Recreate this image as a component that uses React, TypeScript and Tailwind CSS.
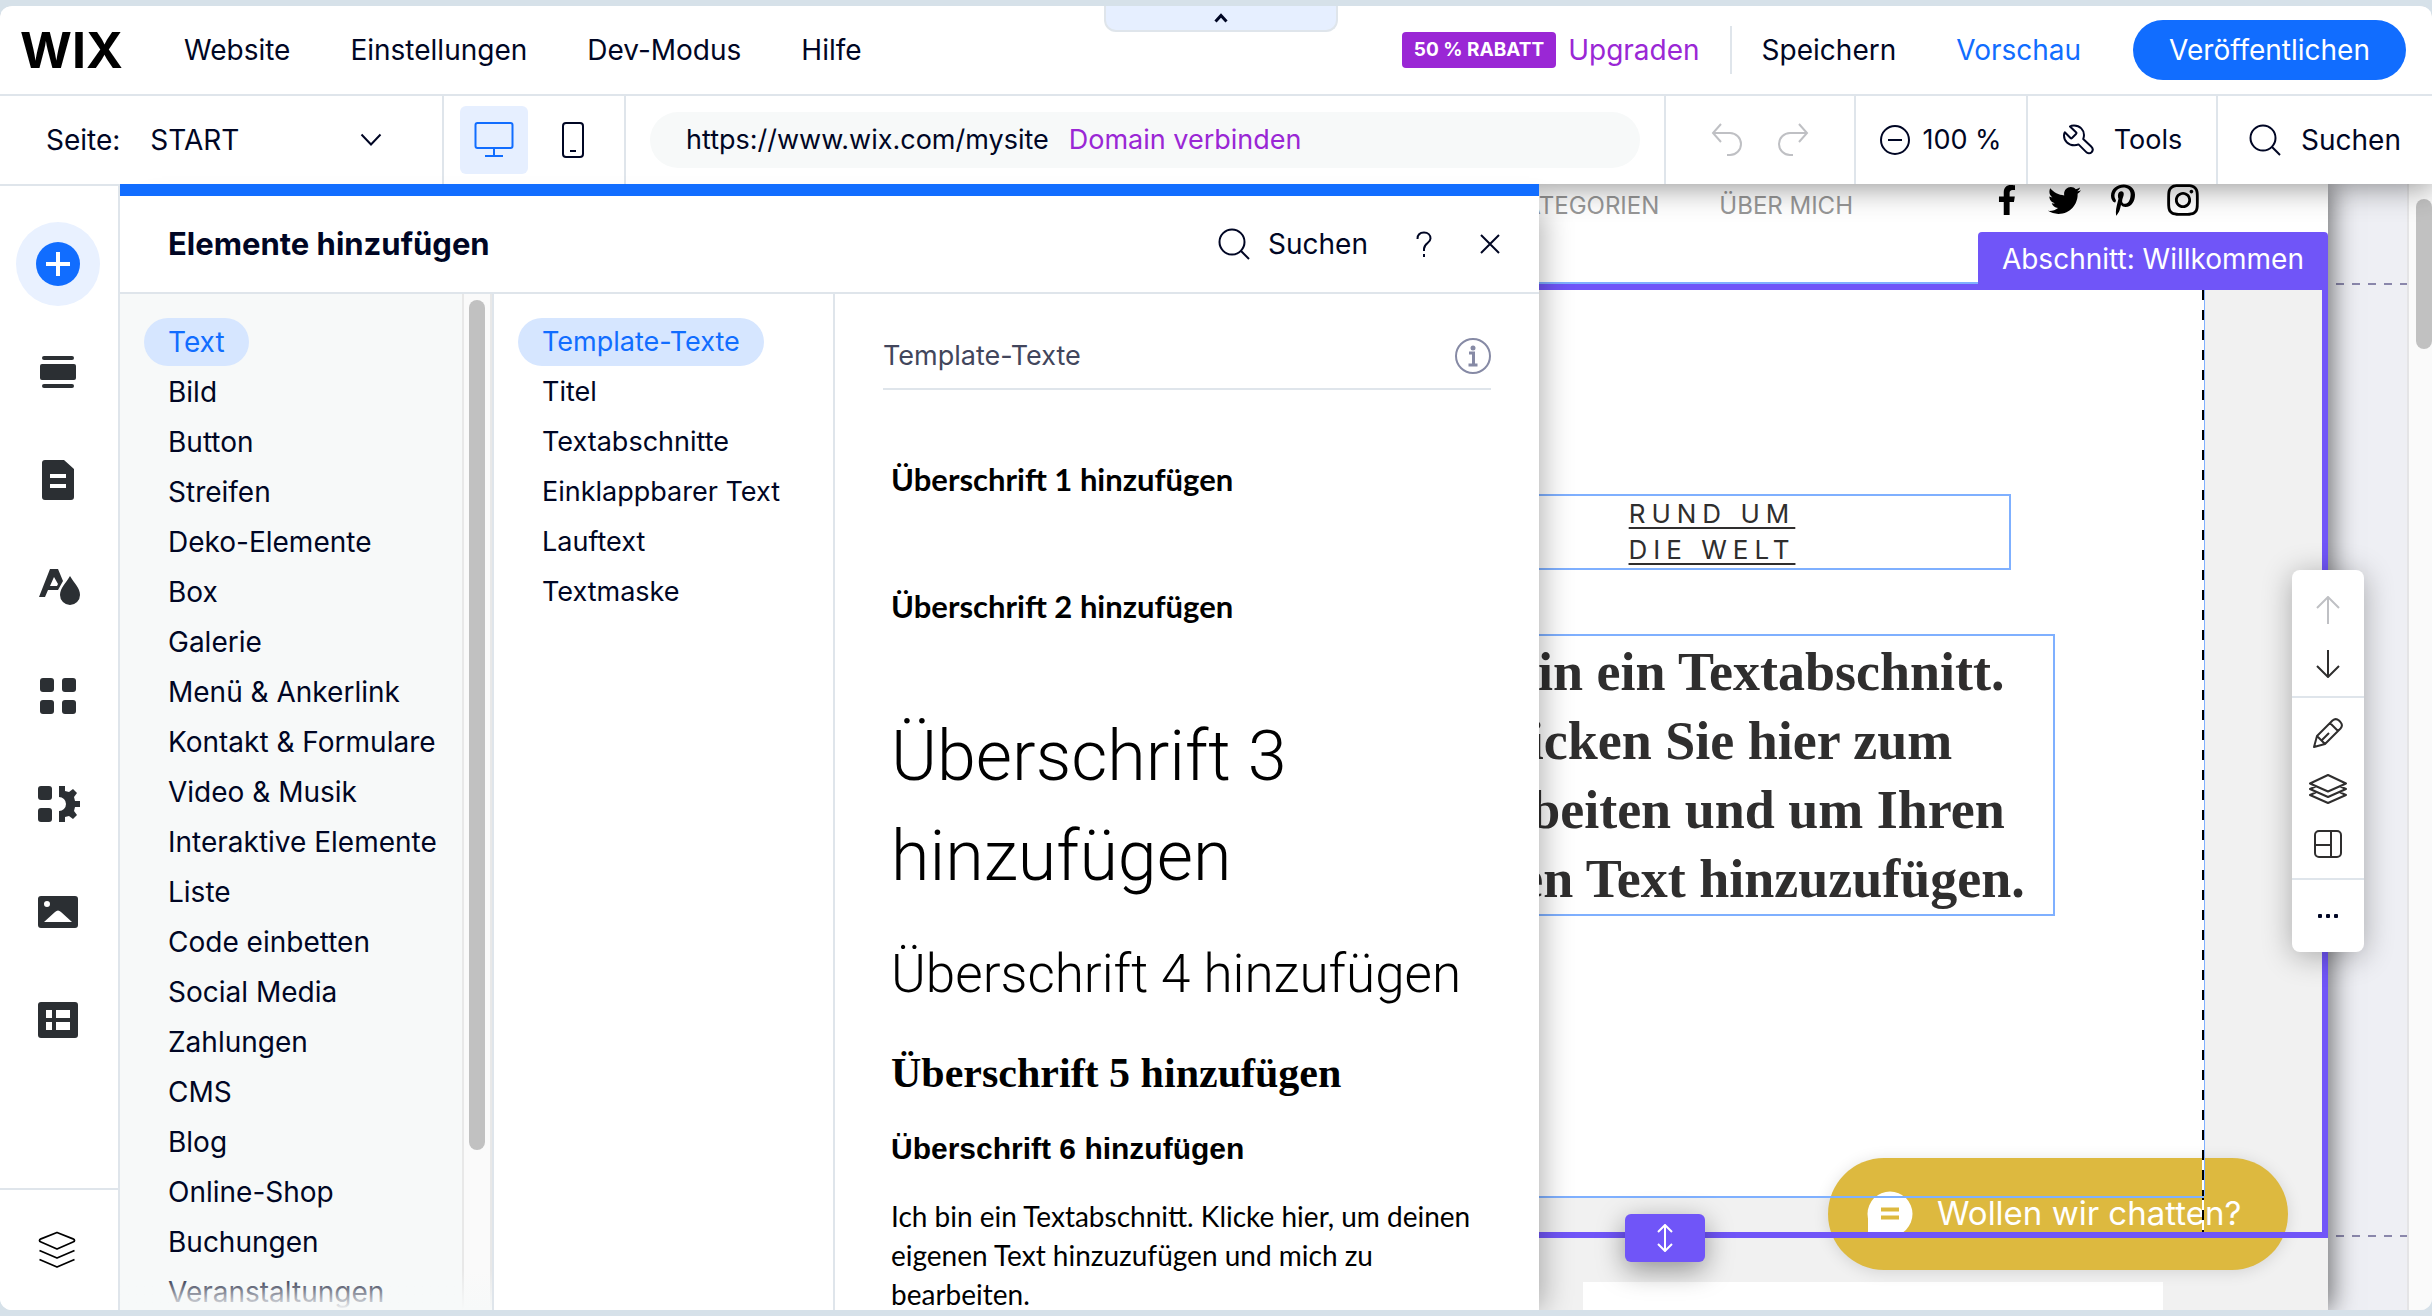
import React from 'react';
import { FaFacebookF, FaTwitter, FaPinterestP, FaInstagram } from 'react-icons/fa';

const CATEGORIES = [
  'Text', 'Bild', 'Button', 'Streifen', 'Deko-Elemente', 'Box', 'Galerie', 'Menü & Ankerlink',
  'Kontakt & Formulare', 'Video & Musik', 'Interaktive Elemente', 'Liste', 'Code einbetten',
  'Social Media', 'Zahlungen', 'CMS', 'Blog', 'Online-Shop', 'Buchungen', 'Veranstaltungen',
];

const TEXT_TYPES = ['Template-Texte', 'Titel', 'Textabschnitte', 'Einklappbarer Text', 'Lauftext', 'Textmaske'];

function SearchIcon() {
  return (
    <svg width="32" height="32" viewBox="0 0 32 32" fill="none" stroke="currentColor" strokeWidth="2" aria-hidden="true">
      <circle cx="14" cy="14" r="12.5" />
      <path d="M22.8 22.8 31 31" />
    </svg>
  );
}

/* ---------- Top bars ---------- */

function MainBar() {
  return (
    <header className="flex h-[90px] shrink-0 items-center border-b-2 border-[#dfe5eb] pr-[26px] pl-5">
      <a href="#start" aria-label="WIX" className="w-[104px] text-[50px] leading-none font-bold text-black">WIX</a>
      <nav className="ml-[60px] flex gap-[60px]">
        {['Website', 'Einstellungen', 'Dev-Modus', 'Hilfe'].map((m) => (
          <button key={m} type="button">{m}</button>
        ))}
      </nav>
      <div className="ml-auto flex items-center">
        <span className="flex h-9 items-center rounded bg-[#9a27d5] px-3 text-[19px] font-bold text-white">50 % RABATT</span>
        <a href="#upgrade" className="ml-3 text-[#9a27d5]">Upgraden</a>
        <span className="mx-[30px] h-12 w-0.5 bg-[#dfe5eb]" />
        <button type="button">Speichern</button>
        <button type="button" className="ml-[60px] text-[#116dff]">Vorschau</button>
        <button type="button" className="ml-[52px] h-[60px] rounded-full bg-[#116dff] px-9 text-white">Veröffentlichen</button>
      </div>
    </header>
  );
}

function ToolBar() {
  return (
    <div className="flex h-[88px] shrink-0 items-stretch">
      <div className="flex w-[444px] items-center border-r-2 border-[#dfe5eb] pl-[46px]">
        <label htmlFor="page">Seite:</label>
        <div className="relative ml-[30px] flex-1">
          <select id="page" className="w-full appearance-none bg-transparent outline-none" defaultValue="START">
            <option>START</option>
          </select>
          <svg className="pointer-events-none absolute top-1/2 right-[60px] -translate-y-1/2" width="22" height="14" viewBox="0 0 22 14" fill="none" stroke="currentColor" strokeWidth="2" aria-hidden="true">
            <path d="m1.5 1.5 9.500 10 9.500-10" />
          </svg>
        </div>
      </div>
      <div className="flex w-[182px] items-center border-r-2 border-[#dfe5eb] pl-4">
        <button type="button" aria-label="Desktop" className="flex size-[68px] items-center justify-center rounded-md bg-[#e6efff] text-[#116dff]">
          <svg width="40" height="36" viewBox="0 0 40 36" fill="none" stroke="currentColor" strokeWidth="2" aria-hidden="true">
            <rect x="1.500" y="1" width="37" height="25" rx="2" />
            <path d="M20 26v8M11 34h18" />
          </svg>
        </button>
        <button type="button" aria-label="Mobil" className="ml-[34px]">
          <svg width="22" height="36" viewBox="0 0 22 36" fill="none" stroke="currentColor" strokeWidth="2" aria-hidden="true">
            <rect x="1" y="1" width="20" height="34" rx="3" />
            <path d="M8 29h6" />
          </svg>
        </button>
      </div>
      <div className="flex flex-1 items-center border-r-2 border-[#dfe5eb] px-6">
        <div className="flex h-14 flex-1 items-center rounded-full bg-[#f7f9f9] pl-9 text-[27px]">
          <span>https://www.wix.com/mysite</span>
          <a href="#domain" className="ml-5 text-[#9a27d5]">Domain verbinden</a>
        </div>
      </div>
      <div className="flex w-[190px] items-center justify-center gap-[34px] border-r-2 border-[#dfe5eb] text-[#bfc0c4]">
        <button type="button" aria-label="Rückgängig">
          <svg width="32" height="34" viewBox="0 0 32 34" fill="none" stroke="currentColor" strokeWidth="2" aria-hidden="true">
            <path d="M10 1 2 10l8 9M2 10h17a10.500 10.500 0 0 1 0 22h-3" />
          </svg>
        </button>
        <button type="button" aria-label="Wiederholen">
          <svg width="32" height="34" viewBox="0 0 32 34" fill="none" stroke="currentColor" strokeWidth="2" aria-hidden="true">
            <path d="m22 1 8 9-8 9M30 10H13a10.500 10.500 0 0 0 0 22h3" />
          </svg>
        </button>
      </div>
      <button type="button" className="flex w-[172px] items-center justify-center gap-3 border-r-2 border-[#dfe5eb] text-[27px]">
        <svg width="30" height="30" viewBox="0 0 30 30" fill="none" stroke="currentColor" strokeWidth="2" aria-hidden="true">
          <circle cx="15" cy="15" r="14" />
          <path d="M8 15h14" />
        </svg>
        100 %
      </button>
      <button type="button" className="flex w-[190px] items-center justify-center gap-5 border-r-2 border-[#dfe5eb] text-[27px]">
        <svg width="32" height="32" viewBox="0 0 32 32" fill="none" stroke="currentColor" strokeWidth="2" strokeLinejoin="round" aria-hidden="true">
          <path d="M8 2.500c1-.8 2.500-1 4-1C18 1.500 22 6 22 11c0 1.600-.4 3-.8 4l8 7.500c1.800 1.800 1.800 4.200.4 5.700-1.600 1.600-4 1.500-5.600-.3l-7.500-7.500c-1.200.6-2.700.9-4.200.9C6.500 21.300 2 17 2 11.500c0-1 .2-2.200.8-3.200l5.700 5.700c.5.500 1 .5 1.500 0l4-4c.6-.6.6-1.200 0-1.800L8 2.500Z" />
        </svg>
        Tools
      </button>
      <button type="button" className="flex w-[214px] items-center justify-center gap-5">
        <SearchIcon />
        Suchen
      </button>
    </div>
  );
}

/* ---------- Left rail ---------- */

const RAIL: { name: string; art: React.ReactNode }[] = [
  {
    name: 'Abschnitte',
    art: (
      <>
        <rect x="5" y="5" width="32" height="4" rx="2" />
        <rect x="3" y="13" width="36" height="16" rx="2" />
        <rect x="5" y="33" width="32" height="4" rx="2" />
      </>
    ),
  },
  {
    name: 'Seiten',
    art: <path fillRule="evenodd" d="M8 1h19l10 9v28a3 3 0 0 1-3 3H8a3 3 0 0 1-3-3V4a3 3 0 0 1 3-3Zm5 14v4h16v-4H13Zm0 10v4h16v-4H13Z" />,
  },
  {
    name: 'Design',
    art: (
      <>
        <path fillRule="evenodd" d="M13 2h8l5 12-5 9H11l-3 7H2L13 2Zm4 8-4 9h7l1-2-4-7Z" />
        <path d="M33 9c4 7 10 12 10 19a10 10 0 0 1-20 0c0-7 6-12 10-19Z" />
      </>
    ),
  },
  {
    name: 'Apps',
    art: (
      <>
        <rect x="3" y="3" width="14" height="14" rx="3" />
        <rect x="25" y="3" width="14" height="14" rx="3" />
        <rect x="3" y="25" width="14" height="14" rx="3" />
        <rect x="25" y="25" width="14" height="14" rx="3" />
      </>
    ),
  },
  {
    name: 'Meine Business-Apps',
    art: (
      <>
        <rect x="1" y="3" width="14" height="14" rx="3" />
        <rect x="1" y="25" width="14" height="14" rx="3" />
        <path d="M22 3h6v5l4 1 4-3 4 4-3 4 1 4h5v6h-5l-1 4 3 4-4 4-4-3-4 1v5h-6V28a7 7 0 1 0 0-14V3Z" />
      </>
    ),
  },
  {
    name: 'Medien',
    art: <path fillRule="evenodd" d="M4 5h34a3 3 0 0 1 3 3v26a3 3 0 0 1-3 3H4a3 3 0 0 1-3-3V8a3 3 0 0 1 3-3Zm6 5a3 3 0 1 0 0 6 3 3 0 0 0 0-6ZM7 31h28L24 21c-2-2-4-2-6 0L7 31Z" />,
  },
  {
    name: 'CMS',
    art: <path fillRule="evenodd" d="M4 3h34a3 3 0 0 1 3 3v30a3 3 0 0 1-3 3H4a3 3 0 0 1-3-3V6a3 3 0 0 1 3-3Zm5 8v8h6v-8H9Zm10 0v8h14v-8H19ZM9 23v8h6v-8H9Zm10 0v8h14v-8H19Z" />,
  },
];

function Rail() {
  return (
    <aside className="relative z-40 flex w-[120px] shrink-0 flex-col border-t-2 border-r-2 border-[#dfe5eb] bg-white pt-6">
      <button type="button" aria-label="Elemente hinzufügen" className="flex h-[108px] w-full items-center justify-center pr-0.5">
        <span className="flex size-[84px] items-center justify-center rounded-full bg-[#e9f1ff]">
          <svg width="44" height="44" viewBox="0 0 44 44" aria-hidden="true">
            <circle cx="22" cy="22" r="22" fill="#116dff" />
            <path d="M22 10v24M10 22h24" stroke="#fff" strokeWidth="4" />
          </svg>
        </span>
      </button>
      {RAIL.map((r) => (
        <button key={r.name} type="button" aria-label={r.name} className="flex h-[108px] w-full items-center justify-center pr-0.5 text-[#2b2f33]">
          <svg width="42" height="42" viewBox="0 0 42 42" fill="currentColor" className="overflow-visible" aria-hidden="true">{r.art}</svg>
        </button>
      ))}
      <button type="button" aria-label="Ebenen" className="mt-auto flex h-[122px] w-full items-center justify-center border-t-2 border-[#dfe5eb] pr-1 text-black">
        <svg width="38" height="38" viewBox="0 0 38 38" fill="none" stroke="currentColor" strokeWidth="1.800" strokeLinejoin="round" aria-hidden="true">
          <path d="M19 1.500 3 7.800c-2 .9-2 2.400 0 3.200l16 7 16-7c2-.8 2-2.300 0-3.200L19 1.500ZM1.500 19.500 19 27l17.500-7.500M1.500 28.500 19 36l17.500-7.500" />
        </svg>
      </button>
    </aside>
  );
}

/* ---------- Add-elements panel ---------- */

function MenuList({ items, active }: { items: string[]; active: string }) {
  return (
    <ul className="flex flex-col gap-0.5 pt-6 pl-6">
      {items.map((c) => (
        <li key={c} className="flex">
          <button
            type="button"
            className={
              c === active
                ? 'h-12 rounded-full bg-[#d6e6ff] px-6 whitespace-nowrap text-[#116dff]'
                : 'h-12 px-6 whitespace-nowrap'
            }
          >
            {c}
          </button>
        </li>
      ))}
    </ul>
  );
}

function AddPanel() {
  return (
    <section className="relative z-30 flex w-[1419px] shrink-0 flex-col border-t-12 border-[#116dff] bg-white shadow-[16px_12px_28px_-12px_rgba(0,0,0,0.3)]">
      <div className="flex h-[98px] shrink-0 items-center border-b-2 border-[#dfe5eb] pr-[39px] pl-12">
        <h2 className="text-[31px] font-bold">Elemente hinzufügen</h2>
        <button type="button" className="ml-auto flex items-center gap-[18px]">
          <SearchIcon />
          Suchen
        </button>
        <button type="button" aria-label="Hilfe" className="ml-12">
          <svg width="16" height="26" viewBox="0 0 16 26" fill="none" stroke="currentColor" strokeWidth="2" aria-hidden="true">
            <path d="M1.500 8c0-4 2.500-6.500 6.500-6.500S14.500 4 14.500 7.500C14.500 12 8 12 8 18v2M8 23v3" />
          </svg>
        </button>
        <button type="button" aria-label="Schließen" className="ml-12">
          <svg width="20" height="20" viewBox="0 0 20 20" fill="none" stroke="currentColor" strokeWidth="2" aria-hidden="true">
            <path d="m1 1 18 18M19 1 1 19" />
          </svg>
        </button>
      </div>
      <div className="flex min-h-0 flex-1">
        <div className="relative flex w-[374px] shrink-0 overflow-hidden border-r-2 border-[#dfe5eb] bg-[#f7f9f9]">
          <div className="w-[342px] shrink-0 text-[28px]">
            <MenuList items={CATEGORIES} active="Text" />
          </div>
          <div className="flex flex-1 justify-center border-x-2 border-[#e8e8e8] bg-[#fafafa] pt-1.5">
            <div className="h-[850px] w-4 rounded-full bg-[#c1c1c1]" />
          </div>
          <div className="pointer-events-none absolute inset-x-0 bottom-0 h-10 bg-gradient-to-t from-[#f7f9f9] to-[#f7f9f9]/0" />
        </div>
        <div className="w-[341px] shrink-0 border-r-2 border-[#dfe5eb] text-[27px]">
          <MenuList items={TEXT_TYPES} active="Template-Texte" />
        </div>
        <div className="flex min-w-0 flex-1 flex-col overflow-hidden px-12 pt-[30px]">
          <div className="flex h-[66px] shrink-0 items-center justify-between border-b-2 border-[#dfe5eb] text-[27px] text-[#42465c]">
            <span>Template-Texte</span>
            <button type="button" aria-label="Info" className="text-[#868aa5]">
              <svg width="36" height="36" viewBox="0 0 36 36" fill="none" stroke="currentColor" strokeWidth="2" aria-hidden="true">
                <circle cx="18" cy="18" r="17" />
                <path d="M14 15h4.500v12M13.500 27h9" strokeWidth="3" />
                <circle cx="18" cy="10" r="2.500" fill="currentColor" stroke="none" />
              </svg>
            </button>
          </div>
          <div className="pl-2 text-black">
            <h1 className="mt-[69px] font-[Lato] text-[31px] leading-[40px] font-bold">Überschrift 1 hinzufügen</h1>
            <h2 className="mt-[87px] font-[Lato] text-[31px] leading-[40px] font-bold">Überschrift 2 hinzufügen</h2>
            <h3 className="mt-20 font-[Roboto] text-[70px] leading-[100px] font-light">Überschrift 3<br />hinzufügen</h3>
            <h4 className="mt-9 font-[Roboto] text-[53px] leading-[64px] font-light whitespace-nowrap">Überschrift 4 hinzufügen</h4>
            <h5 className="mt-[43px] font-['Liberation_Serif'] text-[42px] leading-[48px] font-bold">Überschrift 5 hinzufügen</h5>
            <h6 className="mt-8 font-['Liberation_Sans'] text-[30px] leading-[40px] font-bold">Überschrift 6 hinzufügen</h6>
            <p className="mt-7 font-[Lato] text-[28px] leading-[39px]">Ich bin ein Textabschnitt. Klicke hier, um deinen<br />eigenen Text hinzuzufügen und mich zu<br />bearbeiten.</p>
          </div>
        </div>
      </div>
    </section>
  );
}

/* ---------- Site canvas ---------- */

function SectionTools() {
  return (
    <div className="absolute top-[280px] -right-[42px] z-20 flex w-[72px] flex-col rounded-lg bg-white shadow-[0_4px_30px_rgba(0,0,0,0.3)]">
      <div className="flex h-[128px] flex-col items-center justify-center gap-[26px] border-b-2 border-[#dfe5eb]">
        <button type="button" aria-label="Nach oben" className="pt-2 text-[#bfc0c4]">
          <svg width="24" height="28" viewBox="0 0 24 28" fill="none" stroke="currentColor" strokeWidth="2" aria-hidden="true">
            <path d="M12 28V2M1 12 12 1l11 11" />
          </svg>
        </button>
        <button type="button" aria-label="Nach unten">
          <svg width="24" height="28" viewBox="0 0 24 28" fill="none" stroke="currentColor" strokeWidth="2" aria-hidden="true">
            <path d="M12 0v26M1 16l11 11 11-11" />
          </svg>
        </button>
      </div>
      <div className="flex h-[182px] flex-col items-center justify-center gap-[26px] border-b-2 border-[#dfe5eb]">
        <button type="button" aria-label="Bearbeiten">
          <svg width="30" height="30" viewBox="0 0 30 30" fill="none" stroke="currentColor" strokeWidth="2" strokeLinejoin="round" aria-hidden="true">
            <path d="m1 29 3-11L19.500 2.500c2-1.700 4.500-1.700 6.500 0l1.500 1.700c1.800 2 1.800 4.300 0 6.300L12 26 1 29ZM4 18l8 8M17 5l8 8M9 22l7-7" />
          </svg>
        </button>
        <button type="button" aria-label="Ebenen">
          <svg width="38" height="30" viewBox="0 0 38 30" fill="none" stroke="currentColor" strokeWidth="2" strokeLinejoin="round" aria-hidden="true">
            <path d="M19 1 1 9.500 19 17.500l18-8L19 1ZM7 12.300 1 15l18 8 18-8-6-2.700M7 18.300 1 21l18 8 18-8-6-2.700" />
          </svg>
        </button>
        <button type="button" aria-label="Layout">
          <svg width="28" height="28" viewBox="0 0 28 28" fill="none" stroke="currentColor" strokeWidth="2" aria-hidden="true">
            <rect x="1" y="1" width="26" height="26" rx="4" />
            <path d="M17 1v26M1 15h16" />
          </svg>
        </button>
      </div>
      <button type="button" aria-label="Mehr" className="flex h-[72px] items-center justify-center gap-1">
        <span className="size-1 rounded-[1px] bg-[#000624]" />
        <span className="size-1 rounded-[1px] bg-[#000624]" />
        <span className="size-1 rounded-[1px] bg-[#000624]" />
      </button>
    </div>
  );
}

function Canvas() {
  return (
    <main className="relative flex min-w-0 flex-1 overflow-hidden bg-[#eeeff4]">
      <div className="relative z-10 flex min-w-0 flex-1 flex-col bg-white shadow-[4px_0_24px_rgba(0,0,0,0.55)]">
        <div className="flex h-[100px] shrink-0 items-start justify-end border-b-2 border-[#7fb0ff] pr-[127px] text-black">
          <nav className="mt-1 flex gap-[60px] text-[24px] leading-9 whitespace-nowrap text-[#979797]">
            <a href="#kategorien">KATEGORIEN</a>
            <a href="#ueber">ÜBER MICH</a>
          </nav>
          <div className="-mt-0.5 ml-[139px] flex items-center gap-[26px]">
            <FaFacebookF size={30} />
            <FaTwitter size={33} />
            <FaPinterestP size={32} />
            <FaInstagram size={36} />
          </div>
        </div>

        <section className="relative flex flex-1 border-y-6 border-r-6 border-[#7055f8] text-[#2f2e2e]">
          <div className="flex min-w-0 flex-1 flex-col items-end bg-white">
            <h3 className="mt-[204px] mr-[193px] w-[598px] border-2 border-[#7fb0ff] text-center text-[26px] leading-9 tracking-[6px] underline decoration-2 underline-offset-4">RUND UM<br />DIE WELT</h3>
            <p className="mt-16 mr-[149px] w-[686px] border-2 border-[#7fb0ff] pt-0.5 text-center font-['Liberation_Serif'] text-[54px] leading-[69px] font-bold">
              Ich bin ein Textabschnitt.<br />Klicken Sie hier zum<br />Bearbeiten und um Ihren<br />eigenen Text hinzuzufügen.
            </p>
            <div className="mt-auto h-9 w-full border-t-2 border-[#7fb0ff] bg-[#f1f1f1]" />
          </div>
          <div className="w-[118px] shrink-0 bg-[#f1f1f1]" />

          <span className="absolute -top-[58px] -right-1.5 flex h-[54px] items-center rounded-t bg-[#7055f8] px-6 whitespace-nowrap text-white">Abschnitt: Willkommen</span>

          <button type="button" className="absolute right-[34px] -bottom-[38px] flex h-28 w-[460px] items-center gap-6 rounded-full bg-[#ddb93f] pl-[39px] text-[33px] whitespace-nowrap text-white shadow-[0_2px_16px_rgba(0,0,0,0.12)]">
            <svg width="46" height="46" viewBox="0 0 46 46" aria-hidden="true">
              <circle cx="23" cy="23" r="22.500" fill="#fff" />
              <path d="M1 20v26l16-2Z" fill="#fff" />
              <path d="M14 18.500h18M14 26.500h18" stroke="#ddb93f" strokeWidth="4" />
            </svg>
            Wollen wir chatten?
          </button>
          <div className="absolute right-0 -bottom-1.5 left-0 h-1.5 bg-[#7055f8]" />
          <div className="absolute top-0 right-[118px] bottom-0 w-0.5 bg-[repeating-linear-gradient(to_bottom,#000_0_10px,#fff_10px_20px)]" />
          <div className="absolute top-0 right-[117px] bottom-9 w-px bg-[#7fb0ff]" />
          <div className="absolute right-[118px] bottom-[34px] left-0 h-0.5 bg-[#7fb0ff]" />

          <button type="button" aria-label="Höhe ändern" className="absolute -bottom-[30px] left-[86px] flex h-12 w-20 items-center justify-center rounded-md bg-[#7055f8] text-white shadow-[0_8px_28px_rgba(0,0,0,0.4)]">
            <svg width="16" height="28" viewBox="0 0 16 28" fill="none" stroke="currentColor" strokeWidth="2" aria-hidden="true">
              <path d="M8 1v26M1 8l7-7 7 7M1 20l7 7 7-7" />
            </svg>
          </button>
          <SectionTools />
        </section>

        <div className="flex h-[72px] shrink-0 bg-[#f1f1f1] pt-11 pr-[165px] pl-11">
          <div className="flex-1 bg-white" />
        </div>
      </div>

      <div className="flex w-[81px] shrink-0 flex-col justify-between border-r-2 border-[#e4e4e6] pt-[99px] pb-[73px] pl-2 text-[#8a87ab]">
        <div className="h-0.5 bg-[repeating-linear-gradient(to_right,currentColor_0_8px,transparent_8px_16px)]" />
        <div className="h-0.5 bg-[repeating-linear-gradient(to_right,currentColor_0_8px,transparent_8px_16px)]" />
      </div>
      <div className="flex w-[23px] shrink-0 justify-end bg-[#fafafa] pt-[15px]">
        <div className="h-[150px] w-4 rounded-full bg-[#c1c1c1]" />
      </div>
    </main>
  );
}

export default function App() {
  return (
    <div className="flex h-screen flex-col bg-[#d6e1e9] py-1.5 font-[Inter,sans-serif] text-[28px] text-[#000624]">
      <div className="relative flex min-h-0 flex-1 flex-col overflow-hidden rounded-xl bg-white">
        <div className="relative z-20 flex flex-col bg-white shadow-[0_2px_30px_rgba(0,0,0,0.45)]">
          <MainBar />
          <ToolBar />
          <button type="button" aria-label="Leiste einklappen" className="absolute top-0 left-1/2 -ml-28 flex h-[26px] w-[234px] items-center justify-center rounded-b-xl border-2 border-t-0 border-[#dfe5eb] bg-[#e6efff]">
            <svg width="14" height="10" viewBox="0 0 14 10" fill="none" stroke="currentColor" strokeWidth="3" aria-hidden="true">
              <path d="m1.500 8.500 5.500-6 5.500 6" />
            </svg>
          </button>
        </div>
        <div className="flex min-h-0 flex-1">
          <Rail />
          <AddPanel />
          <Canvas />
        </div>
      </div>
    </div>
  );
}
